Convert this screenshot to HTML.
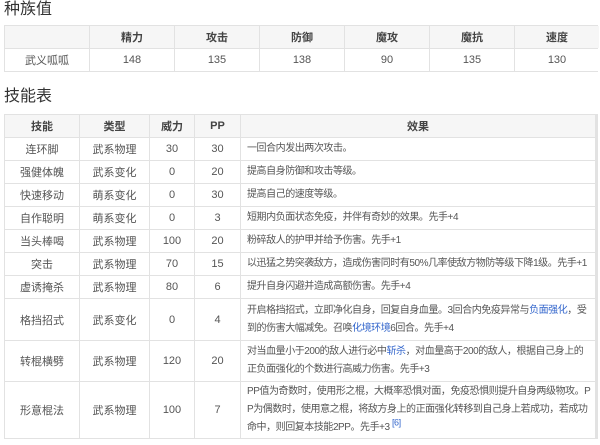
<!DOCTYPE html>
<html><head><meta charset="utf-8"><style>
body{margin:0;background:#fff;font-family:"Liberation Sans","Noto Sans CJK SC",sans-serif;color:#555;width:600px;height:445px;overflow:hidden;position:relative}
h2{position:absolute;left:4px;margin:0;font-size:16px;font-weight:normal;color:#333;line-height:20px}
.g{position:absolute;left:4px;width:592px;display:grid;gap:1px;padding:1px;background:#e2e2e2;font-size:11px}
.g div{background:#fff;display:flex;align-items:center;justify-content:center;white-space:nowrap;overflow:hidden;min-width:0}
.g .h{background:#f6f6f6;font-weight:bold;color:#444}
.g .e{justify-content:flex-start;padding-left:6px;line-height:18px;font-size:10px;letter-spacing:-0.45px}
a{color:#3366cc;text-decoration:none}
sup{font-size:9px;color:#3366cc;line-height:0}
</style></head><body>
<h2 style="top:0">种族值</h2>
<div class="g" style="top:25px;grid-template-columns:84px 84px 84px 84px 84px 84px 84px;grid-template-rows:22px 22px">
<div class="h"></div><div class="h">精力</div><div class="h">攻击</div><div class="h">防御</div><div class="h">魔攻</div><div class="h">魔抗</div><div class="h">速度</div>
<div>武义呱呱</div><div>148</div><div>135</div><div>138</div><div>90</div><div>135</div><div>130</div>
</div>
<h2 style="top:87px">技能表</h2>
<div class="g" style="top:114px;grid-template-columns:74px 69px 44px 45px 354px;grid-template-rows:22px 22px 22px 22px 22px 22px 22px 22px 41px 40px 56px">
<div class="h">技能</div><div class="h">类型</div><div class="h">威力</div><div class="h">PP</div><div class="h">效果</div>
<div>连环脚</div><div>武系物理</div><div>30</div><div>30</div><div class="e">一回合内发出两次攻击。</div>
<div>强健体魄</div><div>武系变化</div><div>0</div><div>20</div><div class="e">提高自身防御和攻击等级。</div>
<div>快速移动</div><div>萌系变化</div><div>0</div><div>30</div><div class="e">提高自己的速度等级。</div>
<div>自作聪明</div><div>萌系变化</div><div>0</div><div>3</div><div class="e">短期内负面状态免疫，并伴有奇妙的效果。先手+4</div>
<div>当头棒喝</div><div>武系物理</div><div>100</div><div>20</div><div class="e">粉碎敌人的护甲并给予伤害。先手+1</div>
<div>突击</div><div>武系物理</div><div>70</div><div>15</div><div class="e">以迅猛之势突袭敌方，造成伤害同时有50%几率使敌方物防等级下降1级。先手+1</div>
<div>虚诱掩杀</div><div>武系物理</div><div>80</div><div>6</div><div class="e">提升自身闪避并造成高额伤害。先手+4</div>
<div>格挡招式</div><div>武系变化</div><div>0</div><div>4</div><div class="e"><span>开启格挡招式，立即净化自身，回复自身血量。3回合内免疫异常与<a>负面强化</a>，受<br>到的伤害大幅减免。召唤<a>化境环境</a>6回合。先手+4</span></div>
<div>转棍横劈</div><div>武系物理</div><div>120</div><div>20</div><div class="e"><span>对当血量小于200的敌人进行必中<a>斩杀</a>，对血量高于200的敌人，根据自己身上的<br>正负面强化的个数进行高威力伤害。先手+3</span></div>
<div>形意棍法</div><div>武系物理</div><div>100</div><div>7</div><div class="e"><span>PP值为奇数时，使用形之棍，大概率恐惧对面，免疫恐惧则提升自身两级物攻。P<br>P为偶数时，使用意之棍，将敌方身上的正面强化转移到自己身上若成功，若成功<br>命中，则回复本技能2PP。先手+3 <sup>[6]</sup></span></div>
</div>
</body></html>
